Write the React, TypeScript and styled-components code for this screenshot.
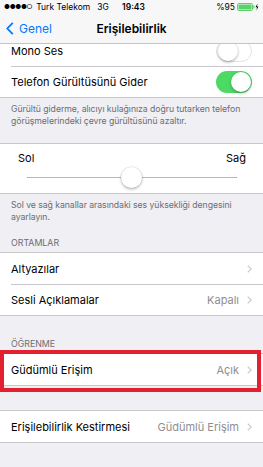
import * as React from "react";
import styled, { createGlobalStyle } from "styled-components";

const GlobalStyle = createGlobalStyle`
  html, body {
    margin: 0;
    padding: 0;
    background: #efeff4;
  }
  body {
    font-family: Inter, "Liberation Sans", sans-serif;
    -webkit-font-smoothing: antialiased;
  }
`;

const Screen = styled.div`
  width: 263px;
  height: 467px;
  overflow: hidden;
  display: flex;
  flex-direction: column;
  background: #efeff4;
`;

const Header = styled.div`
  background: #f7f7f7;
  border-bottom: 1px solid #c4c4c8;
  position: relative;
  z-index: 2;
`;

const StatusBar = styled.div`
  height: 14px;
  display: grid;
  grid-template-columns: 1fr auto 1fr;
  align-items: center;
  padding: 0 4px;
  font-size: 8.5px;
  color: #000;
`;

const StatusLeft = styled.div`
  display: flex;
  align-items: center;
  gap: 3px;
`;

const Signal = styled.span`
  font-size: 6.5px;
  letter-spacing: -0.3px;
  margin-right: 1px;
`;

const Carrier = styled.span<{ $gap?: number }>`
  margin-left: ${(p) => p.$gap ?? 0}px;
`;

const Clock = styled.div`
  font-weight: 600;
  margin-left: 4px;
`;

const StatusRight = styled.div`
  display: flex;
  align-items: center;
  justify-content: flex-end;
  gap: 2px;
`;

const NavBar = styled.div`
  height: 29px;
  display: grid;
  grid-template-columns: 1fr auto 1fr;
  align-items: center;
  padding: 0 6px;
`;

const Back = styled.div`
  display: flex;
  align-items: center;
  gap: 5px;
  color: #007aff;
  font-size: 12px;
`;

const Title = styled.div`
  font-size: 12px;
  font-weight: 600;
  color: #000;
`;

const Scroll = styled.div`
  flex: 1;
  overflow: hidden;
`;

const Content = styled.div`
  margin-top: -10px;
`;

const Group = styled.div`
  background: #fff;
  border-top: 1px solid #c8c7cc;
  border-bottom: 1px solid #c8c7cc;
`;

const Row = styled.div`
  padding-left: 11px;
  background: #fff;
`;

const RowInner = styled.div<{ $first?: boolean }>`
  height: 31px;
  box-sizing: border-box;
  display: flex;
  align-items: center;
  padding-right: 11px;
  border-top: ${(p) => (p.$first ? "none" : "1px solid #c8c7cc")};
  font-size: 11px;
  color: #000;
`;

const Label = styled.div`
  flex: 1;
  white-space: nowrap;
`;

const Detail = styled.div`
  color: #8e8e93;
  font-size: 11px;
  margin-right: 8px;
`;

const Toggle = styled.div<{ $on?: boolean }>`
  width: 36px;
  height: 22px;
  box-sizing: border-box;
  border-radius: 11px;
  display: flex;
  align-items: center;
  justify-content: ${(p) => (p.$on ? "flex-end" : "flex-start")};
  padding: 1px;
  background: ${(p) => (p.$on ? "#4cd964" : "#fff")};
  border: ${(p) => (p.$on ? "none" : "1px solid #e3e3e8")};
`;

const Knob = styled.div`
  width: 20px;
  height: 20px;
  border-radius: 50%;
  background: #fff;
  box-shadow: 0 1.5px 3px rgba(0, 0, 0, 0.25), 0 0 0 0.5px rgba(0, 0, 0, 0.08);
`;

const Footer = styled.div<{ $bottom: number }>`
  padding: 5px 4px ${(p) => p.$bottom}px 11px;
  font-size: 8.7px;
  line-height: 12.3px;
  letter-spacing: -0.05px;
  white-space: nowrap;
  color: #6d6d72;
`;

const SectionHeader = styled.div<{ $top: number }>`
  padding: ${(p) => p.$top}px 11px 3px;
  font-size: 8.8px;
  line-height: 12px;
  color: #6d6d72;
  text-transform: uppercase;
`;

const Gap = styled.div<{ $h: number }>`
  height: ${(p) => p.$h}px;
`;

const SliderCell = styled.div`
  padding: 8px 17px 5px 18px;
  display: flex;
  flex-direction: column;
  gap: 3px;
`;

const SliderLabels = styled.div`
  display: flex;
  justify-content: space-between;
  font-size: 11px;
  line-height: 12px;
  color: #000;
`;

const Track = styled.div`
  margin: 0 9px;
  height: 21px;
  display: flex;
  align-items: center;
  position: relative;
`;

const TrackLine = styled.div`
  flex: 1;
  height: 1px;
  background: #b8b8bc;
  border-left: 1px solid #999;
  border-right: 1px solid #999;
`;

const SliderKnob = styled.div`
  position: absolute;
  left: 50%;
  top: 0;
  width: 21px;
  height: 21px;
  margin-left: -11px;
  border-radius: 50%;
  background: #fff;
  box-shadow: 0 1.5px 3px rgba(0, 0, 0, 0.25), 0 0 0 0.5px rgba(0, 0, 0, 0.1);
`;

const Highlight = styled.div`
  position: relative;
`;

const RedFrame = styled.div`
  position: absolute;
  top: -3px;
  left: 0;
  right: 2px;
  bottom: -6px;
  border: 4px solid #e2202f;
  pointer-events: none;
`;

const Chevron = () => (
  <svg width="5" height="8" viewBox="0 0 5 8">
    <path d="M0.7 0.6 L4.2 4 L0.7 7.4" fill="none" stroke="#c7c7cc" strokeWidth="1.1" />
  </svg>
);

const BackChevron = () => (
  <svg width="8" height="13" viewBox="0 0 8 13">
    <path d="M6.8 0.8 L1.3 6.5 L6.8 12.2" fill="none" stroke="#007aff" strokeWidth="1.8" />
  </svg>
);

const Battery = () => (
  <svg width="22" height="8" viewBox="0 0 22 8">
    <rect x="0.5" y="0.5" width="15" height="7" rx="1.3" fill="none" stroke="#5bd16b" />
    <rect x="1.5" y="1.5" width="13" height="5" fill="#5bd16b" />
    <rect x="16.3" y="2.5" width="1.2" height="3" fill="#5bd16b" />
    <path d="M20.5 0.5 L18.6 4.3 L20 4.3 L19.5 7.5 L21.4 3.6 L20 3.6 Z" fill="#000" />
  </svg>
);

export default function App() {
  return (
    <>
      <GlobalStyle />
      <Screen>
        <Header>
          <StatusBar>
            <StatusLeft>
              <Signal>●●●●○</Signal>
              <Carrier>Turk Telekom</Carrier>
              <Carrier $gap={4}>3G</Carrier>
            </StatusLeft>
            <Clock>19:43</Clock>
            <StatusRight>
              <span>%95</span>
              <Battery />
            </StatusRight>
          </StatusBar>
          <NavBar>
            <Back>
              <BackChevron />
              <span>Genel</span>
            </Back>
            <Title>Erişilebilirlik</Title>
            <div />
          </NavBar>
        </Header>
        <Scroll>
          <Content>
            <Group>
              <Row>
                <RowInner $first>
                  <Label>Mono Ses</Label>
                  <Toggle>
                    <Knob />
                  </Toggle>
                </RowInner>
              </Row>
              <Row>
                <RowInner>
                  <Label>Telefon Gürültüsünü Gider</Label>
                  <Toggle $on>
                    <Knob />
                  </Toggle>
                </RowInner>
              </Row>
            </Group>
            <Footer $bottom={15}>
              Gürültü giderme, alıcıyı kulağınıza doğru tutarken telefon
              <br />
              görüşmelerindeki çevre gürültüsünü azaltır.
            </Footer>
            <Group>
              <SliderCell>
                <SliderLabels>
                  <span>Sol</span>
                  <span>Sağ</span>
                </SliderLabels>
                <Track>
                  <TrackLine />
                  <SliderKnob />
                </Track>
              </SliderCell>
            </Group>
            <Footer $bottom={0}>
              Sol ve sağ kanallar arasındaki ses yüksekliği dengesini
              <br />
              ayarlayın.
            </Footer>
            <SectionHeader $top={14}>Ortamlar</SectionHeader>
            <Group>
              <Row>
                <RowInner $first>
                  <Label>Altyazılar</Label>
                  <Chevron />
                </RowInner>
              </Row>
              <Row>
                <RowInner>
                  <Label>Sesli Açıklamalar</Label>
                  <Detail>Kapalı</Detail>
                  <Chevron />
                </RowInner>
              </Row>
            </Group>
            <SectionHeader $top={22}>ÖĞRENME</SectionHeader>
            <Highlight>
              <Group>
                <Row>
                  <RowInner $first>
                    <Label>Güdümlü Erişim</Label>
                    <Detail>Açık</Detail>
                    <Chevron />
                  </RowInner>
                </Row>
              </Group>
              <RedFrame />
            </Highlight>
            <Gap $h={24} />
            <Group>
              <Row>
                <RowInner $first>
                  <Label>Erişilebilirlik Kestirmesi</Label>
                  <Detail>Güdümlü Erişim</Detail>
                  <Chevron />
                </RowInner>
              </Row>
            </Group>
          </Content>
        </Scroll>
      </Screen>
    </>
  );
}
